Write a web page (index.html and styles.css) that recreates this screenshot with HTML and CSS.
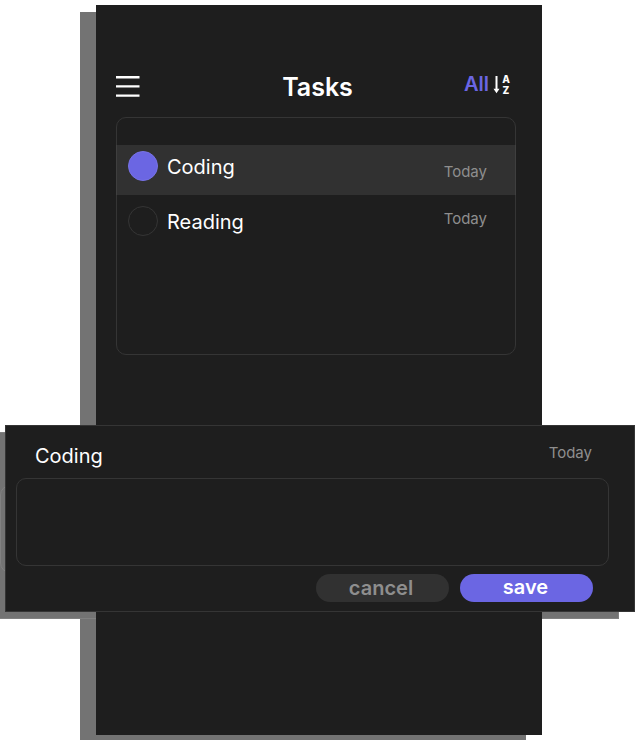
FILE: index.html
```
<!DOCTYPE html>
<html lang="en">
<head>
<meta charset="utf-8">
<title>Tasks</title>
<link rel="stylesheet" href="styles.css">
</head>
<body>
<div class="phone-shadow"></div>
<div class="dialog-shadow"><div class="dialog-shadow-field"></div></div>
<main class="phone">
  <header class="header">
    <svg class="menu" width="24" height="21" viewBox="0 0 24 21"><path d="M0 1.2h23.5M0 10.4h23.5M0 19.6h23.5" stroke="#fff" stroke-width="2.4"/></svg>
    <h1 class="title">Tasks</h1>
    <div class="sort">
      <span class="filter">All</span>
      <svg class="arrow" width="8" height="18" viewBox="0 0 8 18"><path d="M3.5 0v14" stroke="#fff" stroke-width="2"/><path d="M.5 12.7h6l-3 4.5z" fill="#fff"/></svg>
      <span class="letters"><span>A</span><span>Z</span></span>
    </div>
  </header>
  <section class="list">
    <div class="task selected">
      <span class="dot"></span><span class="name">Coding</span><span class="day">Today</span>
    </div>
    <div class="task">
      <span class="dot"></span><span class="name">Reading</span><span class="day">Today</span>
    </div>
  </section>
</main>
<section class="dialog">
  <div class="dialog-head"><span class="name">Coding</span><span class="day">Today</span></div>
  <div class="field"></div>
  <div class="actions">
    <button class="button cancel">cancel</button>
    <button class="button save">save</button>
  </div>
</section>
</body>
</html>
```
FILE: styles.css
```
* { box-sizing: border-box; }
body {
  position: relative;
  margin: 0;
  padding: 5px 0 0 96px;
  width: 640px;
  height: 740px;
  overflow: hidden;
  background: #fff;
  color: #fff;
  font-family: Inter, sans-serif;
}
.phone-shadow {
  position: absolute;
  left: 80px;
  top: 12px;
  width: 446px;
  height: 730px;
  background: #737373;
}
.dialog-shadow {
  position: absolute;
  left: -11px;
  top: 432px;
  width: 630px;
  height: 187px;
  background: #737373;
  border: 1px solid #818181;
}
.dialog-shadow-field {
  margin: 52px 0 0 10px;
  width: 593px;
  height: 88px;
  border: 1px solid #818181;
  border-radius: 10px;
}
.phone {
  position: relative;
  width: 446px;
  height: 730px;
  padding: 62px 26px 0 20px;
  background: #1e1e1e;
}
.header {
  display: grid;
  grid-template-columns: 100px 1fr 100px;
  height: 50px;
}
.menu { margin-top: 9px; }
.title {
  margin: 5px 0 0 3px;
  font-size: 25px;
  line-height: 30px;
  font-weight: 600;
  text-align: center;
}
.sort {
  display: flex;
  justify-content: flex-end;
  align-items: flex-start;
  padding: 5px 5px 0 0;
}
.filter {
  margin-right: 4px;
  color: #6b66e3;
  font-size: 20px;
  line-height: 24px;
  font-weight: 600;
}
.arrow { margin: 4px 1px 0 0; }
.letters {
  display: flex;
  flex-direction: column;
  width: 9px;
  margin-top: 2px;
  padding-right: 1px;
  font-size: 10px;
  line-height: 11px;
  font-weight: 800;
  text-align: center;
}
.list {
  height: 238px;
  padding-top: 27px;
  border: 1px solid #353535;
  border-radius: 10px;
}
.task {
  display: flex;
  align-items: flex-start;
  height: 50px;
  margin: 0 -1px;
  padding: 6px 28px 0 11px;
  border-left: 1px solid transparent;
  border-right: 1px solid transparent;
}
.selected {
  background: #313131;
  border-color: #3f3f3f;
}
.dot {
  width: 30px;
  height: 30px;
  border: 1px solid #353535;
  border-radius: 50%;
}
.selected .dot {
  background: #6b66e3;
  border-color: #7772e6;
}
.name {
  font-size: 20px;
  line-height: 24px;
}
.task .name { margin: 4px 0 0 9px; }
.day {
  margin-left: auto;
  color: #8e8e8e;
  font-size: 15px;
  line-height: 18px;
}
.selected .day { margin-top: 12px; }
.task:not(.selected) { padding-top: 11px; }
.task:not(.selected) .day { margin-top: 4px; }
.dialog {
  position: absolute;
  left: 5px;
  top: 425px;
  width: 630px;
  height: 187px;
  padding: 0 25px 0 10px;
  background: #1e1e1e;
  border: 1px solid #353535;
}
.dialog-head {
  display: flex;
  height: 52px;
  padding: 18px 17px 0 19px;
}
.field {
  height: 88px;
  border: 1px solid #353535;
  border-radius: 10px;
}
.actions {
  display: flex;
  justify-content: flex-end;
  gap: 11px;
  padding: 8px 16px 0 0;
}
.button {
  width: 133px;
  height: 28px;
  padding: 0 2px 2px 0;
  border: 0;
  border-radius: 14px;
  font: 600 20px/24px Inter, sans-serif;
}
.cancel {
  padding: 0 3px 0 0;
  background: #313131;
  color: #8e8e8e;
}
.save {
  background: #6b66e3;
  color: #fff;
}
```
